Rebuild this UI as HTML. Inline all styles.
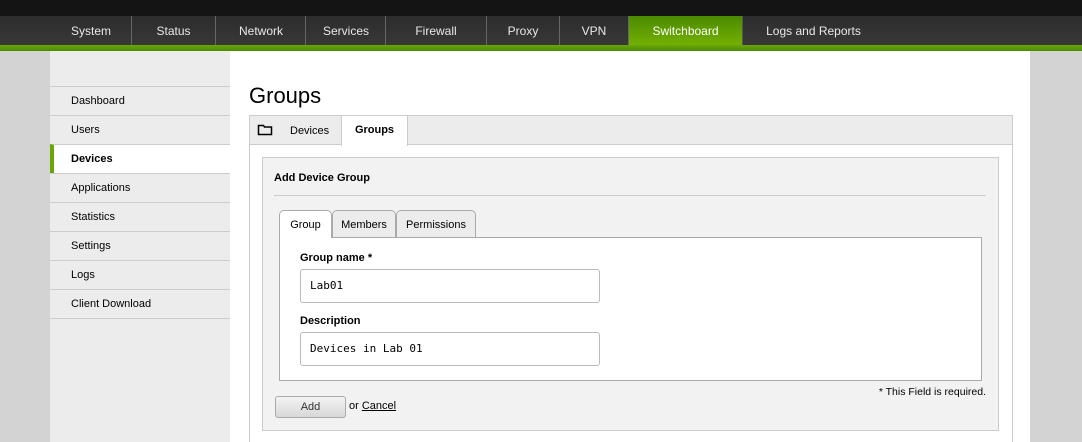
<!DOCTYPE html>
<html><head><style>
*{margin:0;padding:0;box-sizing:border-box}
html,body{width:1082px;height:442px;overflow:hidden}
body{background:#d3d3d3;font-family:"Liberation Sans",sans-serif;font-size:11px;color:#000;position:relative}
.abs{position:absolute}
#top{left:0;top:0;width:1082px;height:16px;background:#141414}
#nav{left:0;top:16px;width:1082px;height:29px;background:linear-gradient(#2c2c2c,#383838)}
#green{left:0;top:45px;width:1082px;height:6px;background:linear-gradient(#6aa60a,#4e8a02)}
.ni{position:absolute;top:16px;height:29px;line-height:31px;color:#e8e8e8;font-size:12px;text-align:center;border-left:1px solid #666}
#side{left:50px;top:51px;width:180px;height:391px;background:#ececec}
#main{left:230px;top:51px;width:800px;height:391px;background:#fff}
.si{position:absolute;left:50px;width:180px;height:30px;border-top:1px solid #ccc;border-bottom:1px solid #ccc;padding-left:21px;line-height:29px;font-size:11px;background:#ececec}
</style></head><body>
<div class="abs" id="top"></div>
<div class="abs" id="nav"></div>
<div class="abs" id="green"></div>
<div class="ni" style="left:50px;width:82px;border-left:none">System</div>
<div class="ni" style="left:131px;width:84px">Status</div>
<div class="ni" style="left:215px;width:91px">Network</div>
<div class="ni" style="left:305px;width:81px">Services</div>
<div class="ni" style="left:385px;width:101px">Firewall</div>
<div class="ni" style="left:486px;width:73px">Proxy</div>
<div class="ni" style="left:559px;width:69px">VPN</div>
<div class="ni" style="left:628px;width:114px;background:linear-gradient(#4a8a00,#74b002);color:#fff">Switchboard</div>
<div class="ni" style="left:742px;width:142px;border-left:1px solid #555;text-align:center">Logs and Reports</div>
<div class="abs" id="side"></div>
<div class="abs" id="main"></div>
<div class="si" style="top:86px">Dashboard</div>
<div class="si" style="top:115px">Users</div>
<div class="si" style="top:144px;background:#fff;font-weight:bold;border-left:4px solid #6aa60a;padding-left:17px">Devices</div>
<div class="si" style="top:173px">Applications</div>
<div class="si" style="top:202px">Statistics</div>
<div class="si" style="top:231px">Settings</div>
<div class="si" style="top:260px">Logs</div>
<div class="si" style="top:289px">Client Download</div>
<div class="abs" style="left:249px;top:83px;font-size:22px">Groups</div>
<div class="abs" style="left:249px;top:115px;width:764px;height:340px;border:1px solid #ccc;background:#fff"></div>
<div class="abs" style="left:250px;top:116px;width:762px;height:29px;background:#ececec;border-bottom:1px solid #ccc"></div>
<svg class="abs" style="left:257px;top:124px" width="16" height="12"><path d="M1.5 1.5h5l1 1.5h7v7.5h-13z" fill="none" stroke="#000" stroke-width="1.5"/></svg>
<div class="abs" style="left:290px;top:125px;font-size:11px">Devices</div>
<div class="abs" style="left:341px;top:116px;width:67px;height:30px;background:#fff;border-left:1px solid #ccc;border-right:1px solid #ccc;font-weight:bold;text-align:center;line-height:29px">Groups</div>
<div class="abs" style="left:262px;top:157px;width:737px;height:274px;background:#f2f2f2;border:1px solid #ccc"></div>
<div class="abs" style="left:274px;top:172px;font-weight:bold">Add Device Group</div>
<div class="abs" style="left:274px;top:195px;width:712px;height:1px;background:#ccc"></div>
<div class="abs" style="left:279px;top:237px;width:703px;height:144px;background:#fff;border:1px solid #aaa"></div>
<div class="abs" style="left:279px;top:210px;width:53px;height:28px;background:#fff;border:1px solid #aaa;border-bottom:none;border-radius:5px 5px 0 0;text-align:center;line-height:28px">Group</div>
<div class="abs" style="left:332px;top:210px;width:64px;height:27px;background:#ececec;border:1px solid #aaa;border-bottom:none;border-radius:5px 5px 0 0;text-align:center;line-height:28px">Members</div>
<div class="abs" style="left:396px;top:210px;width:80px;height:27px;background:#ececec;border:1px solid #aaa;border-bottom:none;border-radius:5px 5px 0 0;text-align:center;line-height:28px">Permissions</div>
<div class="abs" style="left:300px;top:252px;font-weight:bold">Group name *</div>
<div class="abs" style="left:300px;top:269px;width:300px;height:34px;border:1px solid #bbb;border-radius:3px;font-family:'DejaVu Sans Mono',monospace;font-size:11px;padding-left:9px;line-height:32px">Lab01</div>
<div class="abs" style="left:300px;top:315px;font-weight:bold">Description</div>
<div class="abs" style="left:300px;top:332px;width:300px;height:34px;border:1px solid #bbb;border-radius:3px;font-family:'DejaVu Sans Mono',monospace;font-size:11px;padding-left:9px;line-height:32px">Devices in Lab 01</div>
<div class="abs" style="left:800px;top:386px;width:186px;text-align:right;font-size:10.5px">* This Field is required.</div>
<div class="abs" style="left:275px;top:396px;width:71px;height:22px;border:1px solid #aaa;border-radius:3px;background:linear-gradient(#f4f4f4,#d8d8d8);text-align:center;line-height:20px;color:#333">Add</div>
<div class="abs" style="left:349px;top:400px">or <u>Cancel</u></div>
</body></html>
